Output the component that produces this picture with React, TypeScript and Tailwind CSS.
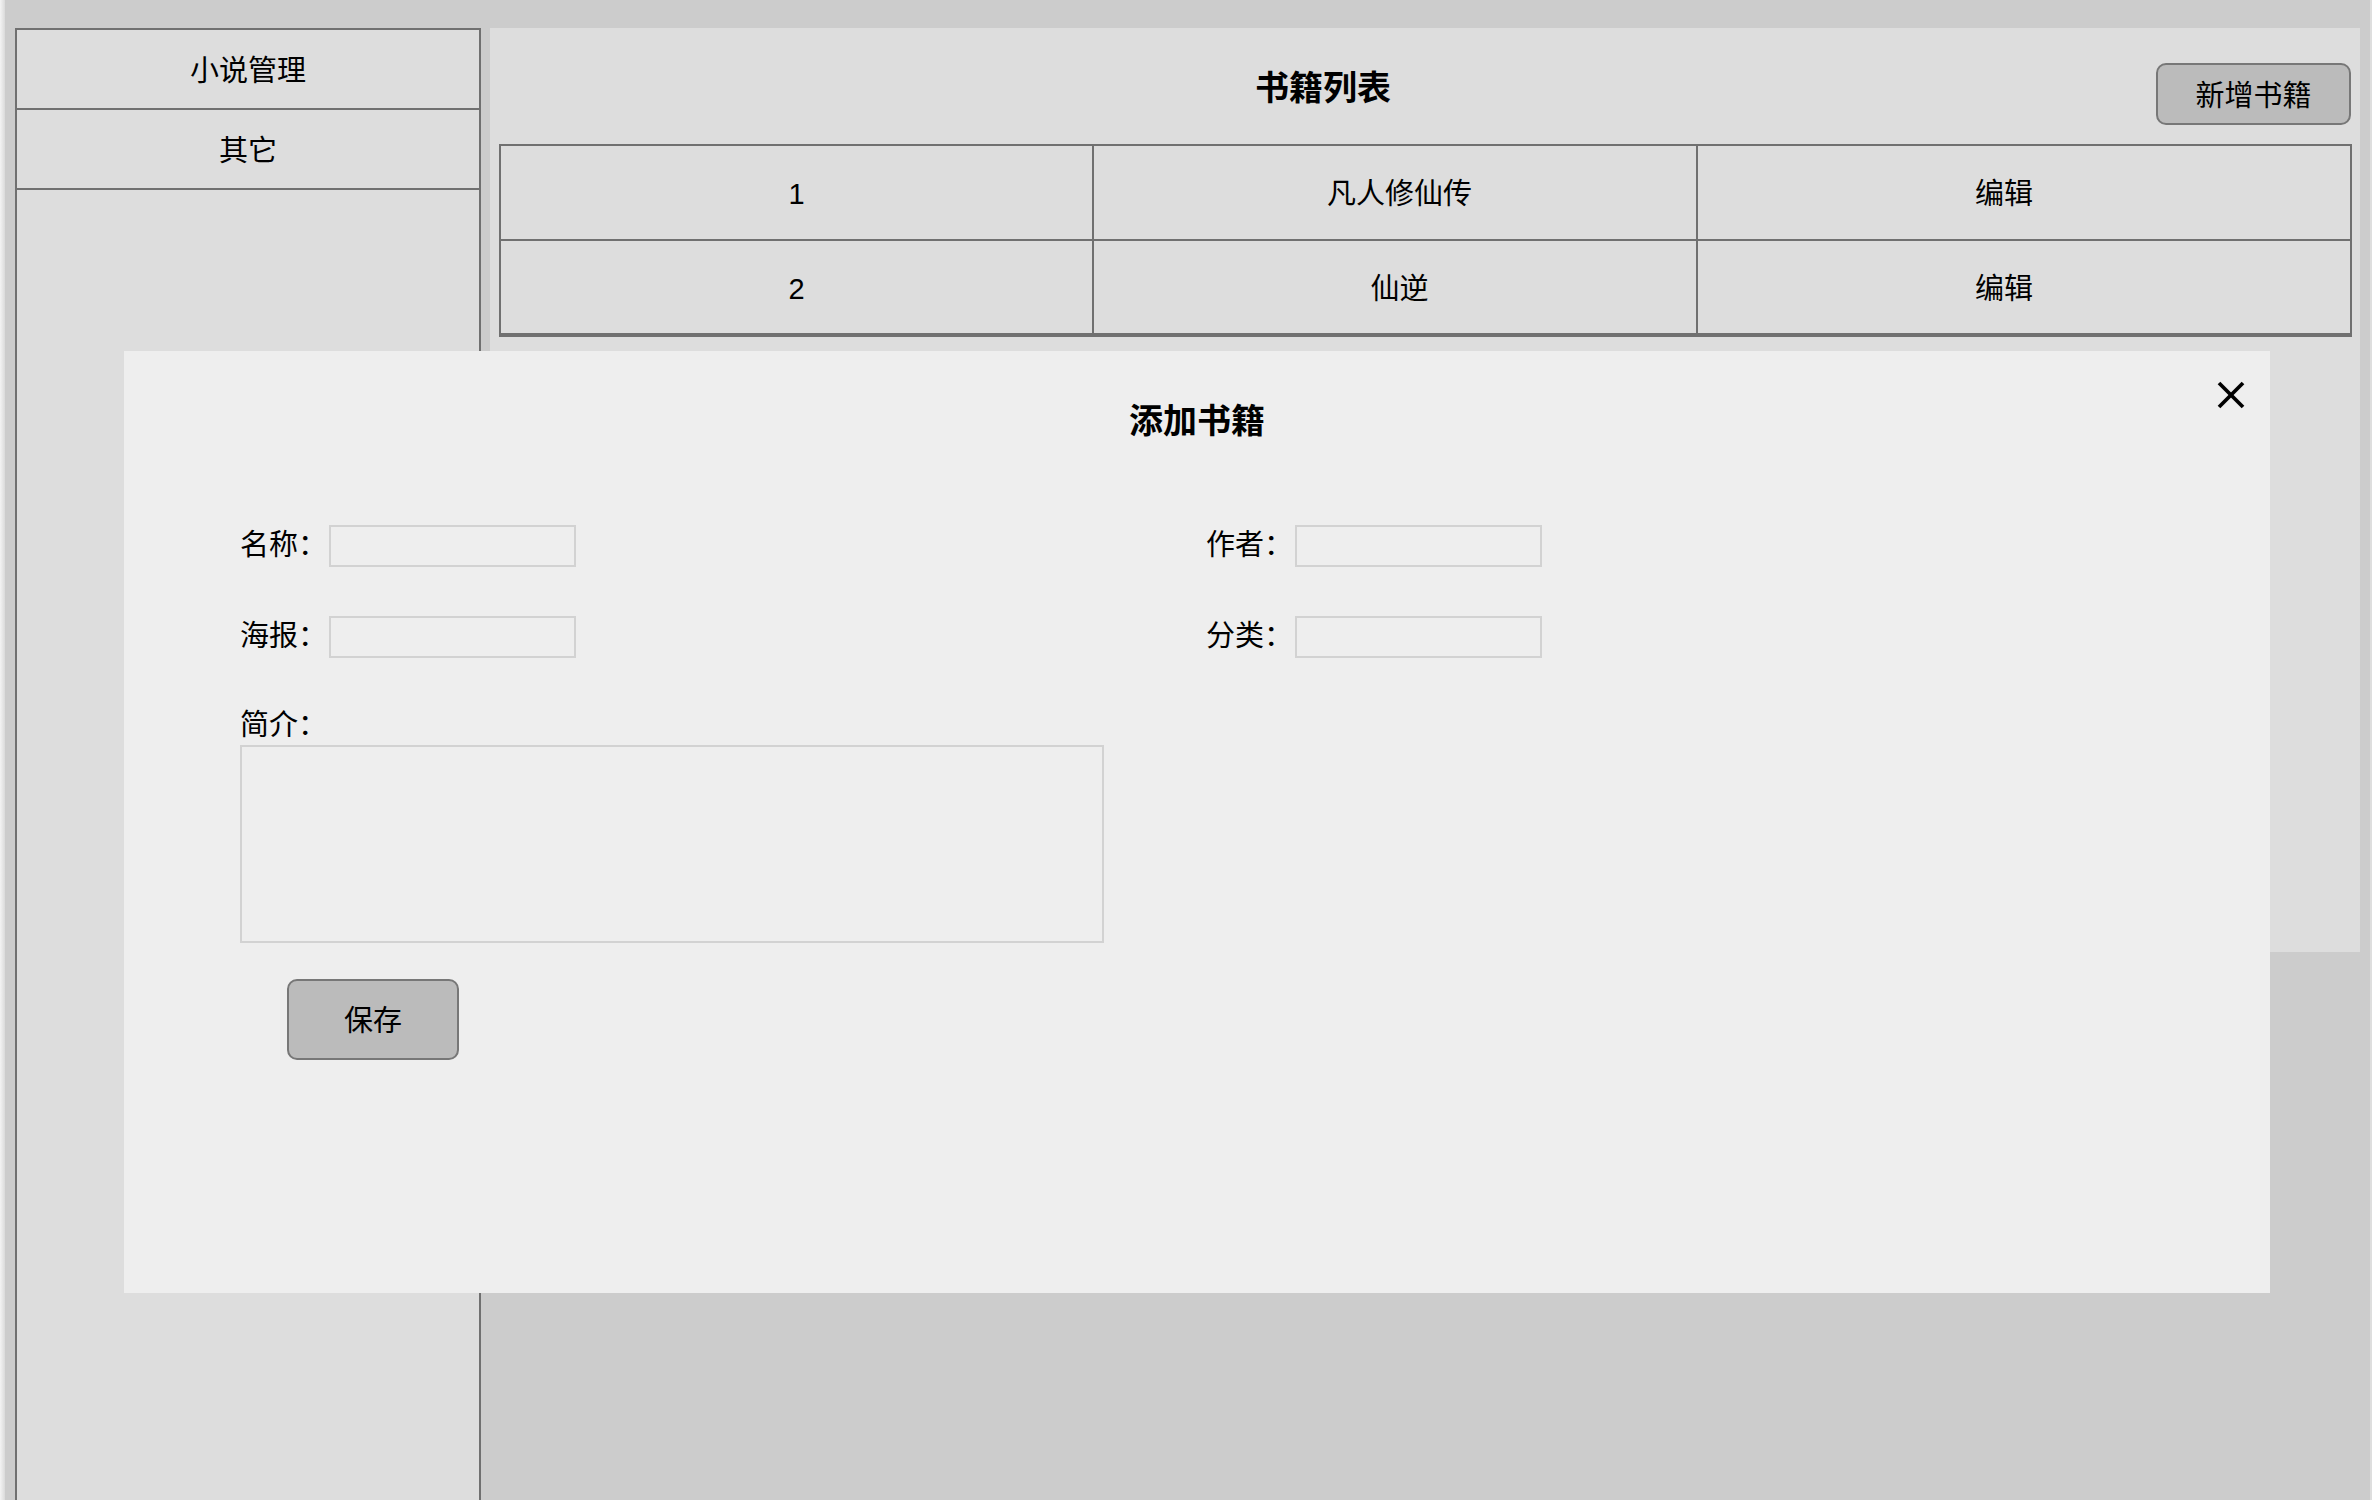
import React from "react";

const font = { fontFamily: '"Liberation Sans", "Noto Sans CJK SC", sans-serif' };

function Field({ label }: { label: string }) {
  return (
    <div className="flex items-center h-[42px]">
      <span className="text-[29px] leading-[40px] text-black pb-[3px]">{label}</span>
      <div className="ml-[2px] w-[247px] h-[42px] border-2 border-[#d2d2d2] bg-[#eeeeee]" />
    </div>
  );
}

export default function App() {
  return (
    <div className="relative w-full h-[1500px] overflow-hidden bg-[#cccccc] flex" style={font}>
      <div className="w-[5px] h-full bg-gradient-to-r from-[#f4f4f4] to-[#dadada]" />

      {/* Sidebar */}
      <div className="ml-[10px] mt-[28px] w-[466px] h-[1500px] border-2 border-b-0 border-[#707070] bg-[#dddddd] flex flex-col">
        <div className="h-[80px] pt-[5px] border-b-2 border-[#707070] flex items-center justify-center text-[29px] text-black">
          小说管理
        </div>
        <div className="h-[80px] pt-[5px] border-b-2 border-[#707070] flex items-center justify-center text-[29px] text-black">
          其它
        </div>
      </div>

      {/* Main panel */}
      <div className="ml-[9px] mt-[28px] w-[1870px] h-[924px] bg-[#dddddd] flex flex-col">
        <div className="h-[116px] flex items-start">
          <div className="flex-1 mt-[40px] text-center text-[34px] leading-[40px] font-bold text-black">书籍列表</div>
          <button className="mt-[35px] mr-[9px] w-[195px] h-[62px] pt-[5px] rounded-[10px] border-2 border-[#777777] bg-[#bbbbbb] text-[29px] text-black">
            新增书籍
          </button>
        </div>
        <div className="ml-[9px] w-[1853px] border-2 border-b-4 border-[#707070] flex flex-col text-[29px] text-black">
          <div className="flex h-[95px] border-b-2 border-[#707070]">
            <div className="w-[593px] pt-[5px] border-r-2 border-[#707070] flex items-center justify-center">1</div>
            <div className="w-[604px] pt-[5px] pl-[9px] border-r-2 border-[#707070] flex items-center justify-center">凡人修仙传</div>
            <div className="flex-1 pt-[5px] pr-[40px] flex items-center justify-center">编辑</div>
          </div>
          <div className="flex h-[92px]">
            <div className="w-[593px] pt-[5px] border-r-2 border-[#707070] flex items-center justify-center">2</div>
            <div className="w-[604px] pt-[5px] pl-[9px] border-r-2 border-[#707070] flex items-center justify-center">仙逆</div>
            <div className="flex-1 pt-[5px] pr-[40px] flex items-center justify-center">编辑</div>
          </div>
        </div>
      </div>

      <div className="flex-1" />
      <div className="w-[2px] h-full bg-[#dedede]" />

      {/* Modal */}
      <div className="absolute left-[124px] top-[351px] w-[2146px] h-[942px] bg-[#eeeeee] flex flex-col text-black">
        <button className="absolute left-[2093px] top-[30px] w-[28px] h-[28px]">
          <svg width="28" height="28" viewBox="0 0 28 28">
            <line x1="2" y1="2" x2="26" y2="26" stroke="#000" strokeWidth="3.8" />
            <line x1="26" y1="2" x2="2" y2="26" stroke="#000" strokeWidth="3.8" />
          </svg>
        </button>
        <div className="mt-[50px] text-center text-[34px] leading-[40px] font-bold">添加书籍</div>

        <div className="mt-[84px] pl-[116px] grid grid-cols-[966px_968px] gap-y-[49px]">
          <Field label="名称：" />
          <Field label="作者：" />
          <Field label="海报：" />
          <Field label="分类：" />
        </div>

        <div className="pl-[116px] mt-[47px] flex flex-col items-start">
          <span className="text-[29px] leading-[40px]">简介：</span>
          <div className="w-[864px] h-[198px] border-2 border-[#d2d2d2] bg-[#eeeeee]" />
          <button className="mt-[36px] ml-[47px] w-[172px] h-[81px] pt-[5px] rounded-[10px] border-2 border-[#777777] bg-[#bbbbbb] text-[29px] text-black">
            保存
          </button>
        </div>
      </div>
    </div>
  );
}
